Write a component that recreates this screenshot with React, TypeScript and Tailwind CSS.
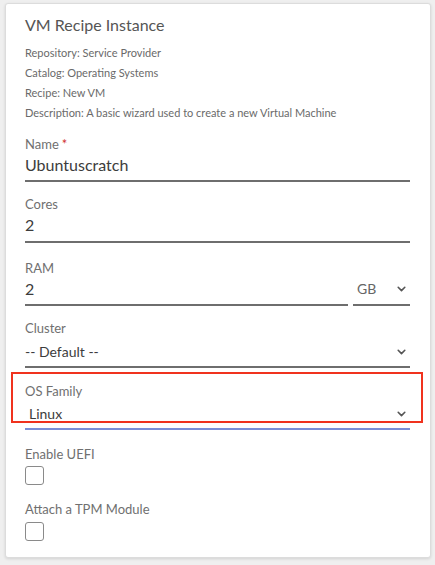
import { type ReactNode } from "react";

const FONT = { fontFamily: "Lato, 'Open Sans', sans-serif" };

function Chevron() {
  return (
    <svg width="9" height="6" viewBox="0 0 9 6" className="shrink-0">
      <path d="M1.2 1.3l3.3 3.3 3.3-3.3" fill="none" stroke="#555" strokeWidth="1.6" strokeLinecap="round" strokeLinejoin="round" />
    </svg>
  );
}

function Label({ children, className = "" }: { children: ReactNode; className?: string }) {
  return <div className={"text-[13px] leading-[18px] text-[#707070] " + className}>{children}</div>;
}

function TextField({
  label,
  value,
  gap,
  pb,
  required,
}: {
  label: string;
  value: string;
  gap: string;
  pb: string;
  required?: boolean;
}) {
  return (
    <div className={gap}>
      <Label>
        {label}
        {required && <span className="ml-[3px] text-[#d0312d]">*</span>}
      </Label>
      <div className={"mt-[1px] border-b-2 border-[#6e6e6e] text-[16px] leading-[22px] text-[#3c3c3c] " + pb}>{value}</div>
    </div>
  );
}

function Checkbox() {
  return <div className="h-[19px] w-[19px] rounded-[3px] border border-[#8a8a8a] bg-white" />;
}

export default function App() {
  return (
    <div className="min-h-[565px] w-[435px] bg-[#efefef] pl-[5px] pt-[3px]" style={FONT}>
      <div className="h-[555px] w-[426px] rounded-[3px] border border-[#dcdcdc] bg-white pl-[19px] pr-[20px] pt-[9px] shadow-[0_1px_3px_rgba(0,0,0,0.12)]">
        <h1 className="text-[16px] leading-[24px] text-[#555]">VM Recipe Instance</h1>
        <div className="mt-[6px] text-[11px] leading-[20px] text-[#6a6a6a]">
          <div>Repository: Service Provider</div>
          <div>Catalog: Operating Systems</div>
          <div>Recipe: New VM</div>
          <div>Description: A basic wizard used to create a new Virtual Machine</div>
        </div>

        <TextField label="Name" value="Ubuntuscratch" gap="mt-[12px]" pb="pb-[4px]" required />
        <TextField label="Cores" value="2" gap="mt-[13px]" pb="pb-[5px]" />

        <div className="mt-[16px]">
          <Label>RAM</Label>
          <div className="mt-[1px] flex gap-[5px]">
            <div className="flex-1 border-b-2 border-[#6e6e6e] pb-[4px] text-[16px] leading-[22px] text-[#3c3c3c]">2</div>
            <div className="flex w-[57px] items-center justify-between border-b-2 border-[#6e6e6e] pb-[4px] pl-[4px] pr-[4px] text-[14px] leading-[22px] text-[#666]">
              <span>GB</span>
              <Chevron />
            </div>
          </div>
        </div>

        <div className="mt-[13px]">
          <Label>Cluster</Label>
          <div className="mt-[4px] flex items-center justify-between border-b-2 border-[#6e6e6e] pb-[3px] pr-[4px] text-[14px] leading-[22px] text-[#3c3c3c]">
            <span>-- Default --</span>
            <Chevron />
          </div>
        </div>

        <div className="relative mt-[14px]">
          <div className="absolute -left-[14px] -right-[13px] -top-[10px] h-[51px] border-2 border-[#f0321e]" />
          <Label>OS Family</Label>
          <div className="mt-[3px] flex items-center justify-between border-b-2 border-[#7b8fd8] pb-[3px] pl-[4px] pr-[4px] text-[14px] leading-[22px] text-[#3c3c3c]">
            <span>Linux</span>
            <Chevron />
          </div>
        </div>

        <div className="mt-[15px]">
          <Label>Enable UEFI</Label>
          <div className="mt-[3px]">
            <Checkbox />
          </div>
        </div>

        <div className="mt-[15px]">
          <Label>Attach a TPM Module</Label>
          <div className="mt-[4px]">
            <Checkbox />
          </div>
        </div>
      </div>
    </div>
  );
}
